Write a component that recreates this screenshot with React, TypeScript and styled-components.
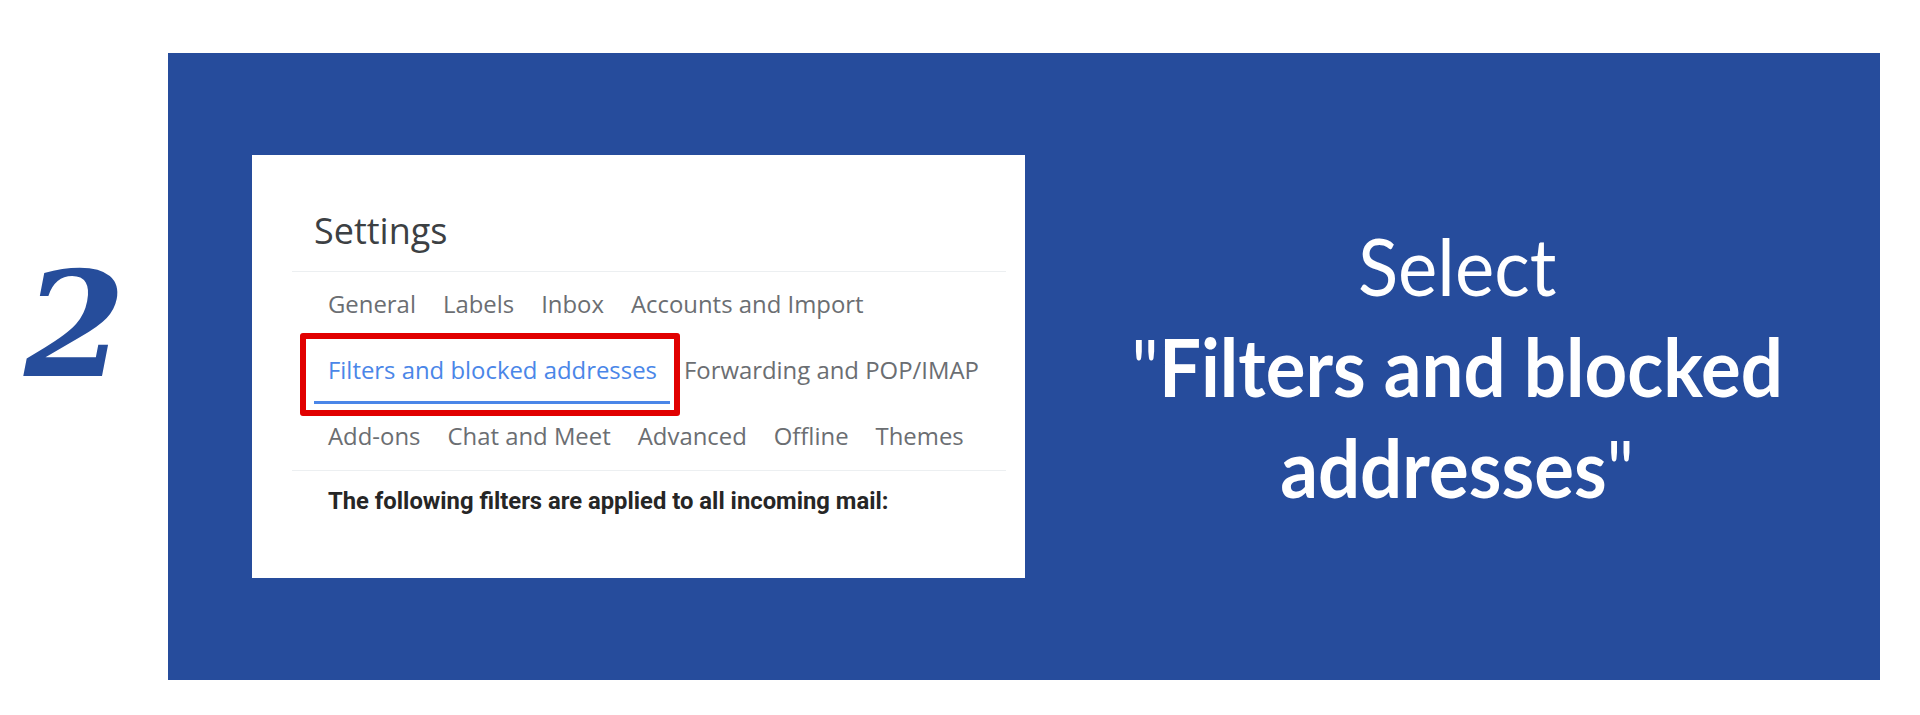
import React from "react";
import styled, { createGlobalStyle } from "styled-components";

const GlobalStyle = createGlobalStyle`
  html, body {
    margin: 0;
    padding: 0;
    background: #ffffff;
  }
  * { box-sizing: border-box; }
`;

const Page = styled.div`
  width: 1920px;
  height: 715px;
  display: flex;
  align-items: flex-start;
  padding-top: 53px;
  background: #ffffff;
  overflow: hidden;
`;

const StepCol = styled.div`
  width: 168px;
  flex: none;
  padding-left: 24px;
  padding-top: 200px;
`;

const StepNumber = styled.div`
  font-family: "DejaVu Serif", "Liberation Serif", serif;
  font-style: italic;
  font-weight: 700;
  font-size: 146px;
  line-height: 144px;
  color: #264d9b;
`;

const Panel = styled.div`
  width: 1712px;
  height: 627px;
  flex: none;
  background: #264c9c;
  display: flex;
  align-items: center;
  padding-left: 84px;
`;

const Card = styled.div`
  width: 773px;
  height: 423px;
  flex: none;
  background: #ffffff;
  padding: 52px 19px 0 40px;
  display: flex;
  flex-direction: column;
`;

const Heading = styled.div`
  font-family: "Open Sans", Roboto, sans-serif;
  font-size: 36px;
  line-height: 48px;
  font-weight: 400;
  color: #3c4043;
  padding-left: 22px;
  margin-bottom: 16px;
`;

const Divider = styled.div`
  height: 1px;
  background: #eceff1;
`;

const TabRow = styled.div`
  display: flex;
  padding-left: 22px;
`;

const Tab = styled.div<{ $active?: boolean }>`
  position: relative;
  height: 66px;
  display: flex;
  align-items: center;
  padding: 0 13px 0 14px;
  border-bottom: 3px solid ${(p) => (p.$active ? "#4a86e8" : "transparent")};
  font-family: "Open Sans", Roboto, sans-serif;
  font-size: 23.9px;
  font-weight: 500;
  color: ${(p) => (p.$active ? "#4a86e8" : "#6b6e72")};
  white-space: nowrap;
`;

const Highlight = styled.div`
  position: absolute;
  top: -5px;
  left: -14px;
  right: -10px;
  bottom: -15px;
  border: 6px solid #e10000;
  border-radius: 3px;
  pointer-events: none;
`;

const Note = styled.div`
  font-family: Roboto, "Liberation Sans", sans-serif;
  font-weight: 700;
  font-size: 23.8px;
  color: #262626;
  padding-left: 36px;
  margin-top: 16px;
`;

const Caption = styled.div`
  flex: 1;
  text-align: center;
  font-family: Lato, "Open Sans", sans-serif;
  font-size: 80px;
  line-height: 101px;
  color: #ffffff;
  padding-left: 10px;
  transform: scaleX(0.93);
`;

const Strong = styled.span`
  font-weight: 700;
`;

const rows: { label: string; active?: boolean }[][] = [
  [{ label: "General" }, { label: "Labels" }, { label: "Inbox" }, { label: "Accounts and Import" }],
  [{ label: "Filters and blocked addresses", active: true }, { label: "Forwarding and POP/IMAP" }],
  [{ label: "Add-ons" }, { label: "Chat and Meet" }, { label: "Advanced" }, { label: "Offline" }, { label: "Themes" }],
];

export default function App() {
  return (
    <>
      <GlobalStyle />
      <Page>
        <StepCol>
          <StepNumber>2</StepNumber>
        </StepCol>
        <Panel>
          <Card>
            <Heading>Settings</Heading>
            <Divider />
            {rows.map((row, i) => (
              <TabRow key={i}>
                {row.map((t) => (
                  <Tab key={t.label} $active={t.active}>
                    {t.label}
                    {t.active && <Highlight />}
                  </Tab>
                ))}
              </TabRow>
            ))}
            <Divider />
            <Note>The following filters are applied to all incoming mail:</Note>
          </Card>
          <Caption>
            Select
            <br />
            "<Strong>Filters and blocked</Strong>
            <br />
            <Strong>addresses</Strong>"
          </Caption>
        </Panel>
      </Page>
    </>
  );
}
